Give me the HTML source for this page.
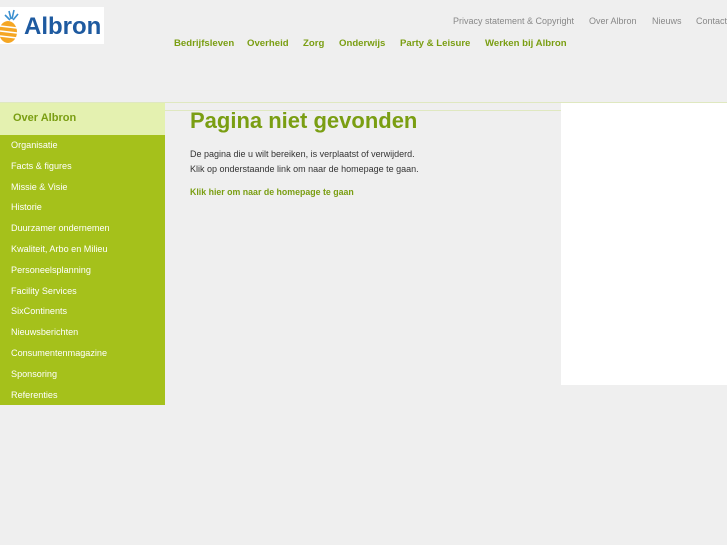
<!DOCTYPE html>
<html><head><meta charset="utf-8"><style>
body{margin:0;width:727px;height:545px;background:#efefef;font-family:"Liberation Sans",sans-serif;position:relative;overflow:hidden}
.a{position:absolute;white-space:nowrap}
.top{font-size:9px;color:#888;top:16px}
.nav{font-size:9.6px;font-weight:bold;color:#7a9e12;top:38px}
.side{position:absolute;left:0;top:135px;width:165px;height:270px;background:#a5c11b}
.side div{color:#fff;font-size:9.1px;height:20.8px;line-height:20.8px;padding-left:11px}
</style></head><body>
<div class="a" style="left:0;top:7px;width:104px;height:37px;background:#fff;overflow:hidden">
<svg width="22" height="37" style="position:absolute;left:0;top:0"><g stroke="#3a8fd0" stroke-width="1.6"><line x1="9" y1="4" x2="11" y2="12"/><line x1="14" y1="3" x2="12" y2="12"/><line x1="18" y1="7" x2="13" y2="13"/><line x1="5" y1="8" x2="10" y2="13"/></g><ellipse cx="8" cy="25" rx="9" ry="11" fill="#f5a623"/><g stroke="#fff" stroke-width="1.5"><line x1="0" y1="19" x2="17" y2="21"/><line x1="0" y1="24" x2="17" y2="26"/><line x1="0" y1="29" x2="17" y2="31"/></g></svg>
<span class="a" style="left:24px;top:6px;font-size:24px;font-weight:bold;color:#1e5aa0">Albron</span></div>
<span class="a top" style="left:453px">Privacy statement &amp; Copyright</span>
<span class="a top" style="left:589px">Over Albron</span>
<span class="a top" style="left:652px">Nieuws</span>
<span class="a top" style="left:696px">Contact</span>
<span class="a nav" style="left:174px">Bedrijfsleven</span>
<span class="a nav" style="left:247px">Overheid</span>
<span class="a nav" style="left:303px">Zorg</span>
<span class="a nav" style="left:339px">Onderwijs</span>
<span class="a nav" style="left:400px">Party &amp; Leisure</span>
<span class="a nav" style="left:485px">Werken bij Albron</span>
<div class="a" style="left:0;top:102px;width:727px;height:1px;background:#dfe8c0"></div>
<div class="a" style="left:165px;top:110px;width:396px;height:1px;background:#dfe8c0"></div>
<div class="a" style="left:561px;top:103px;width:166px;height:282px;background:#fff"></div>
<div class="a" style="left:0;top:103px;width:165px;height:32px;background:#e4f1b0"><span class="a" style="left:13px;top:9px;font-size:11px;font-weight:bold;color:#7a9e12">Over Albron</span></div>
<div class="side"><div>Organisatie</div><div>Facts &amp; figures</div><div>Missie &amp; Visie</div><div>Historie</div><div>Duurzamer ondernemen</div><div>Kwaliteit, Arbo en Milieu</div><div>Personeelsplanning</div><div>Facility Services</div><div>SixContinents</div><div>Nieuwsberichten</div><div>Consumentenmagazine</div><div>Sponsoring</div><div>Referenties</div></div>
<span class="a" style="left:190px;top:108px;font-size:22px;font-weight:bold;color:#7a9e12">Pagina niet gevonden</span>
<span class="a" style="left:190px;top:147px;font-size:9px;color:#333;line-height:15px">De pagina die u wilt bereiken, is verplaatst of verwijderd.<br>Klik op onderstaande link om naar de homepage te gaan.</span>
<span class="a" style="left:190px;top:187px;font-size:8.8px;font-weight:bold;color:#7a9e12">Klik hier om naar de homepage te gaan</span>
</body></html>
